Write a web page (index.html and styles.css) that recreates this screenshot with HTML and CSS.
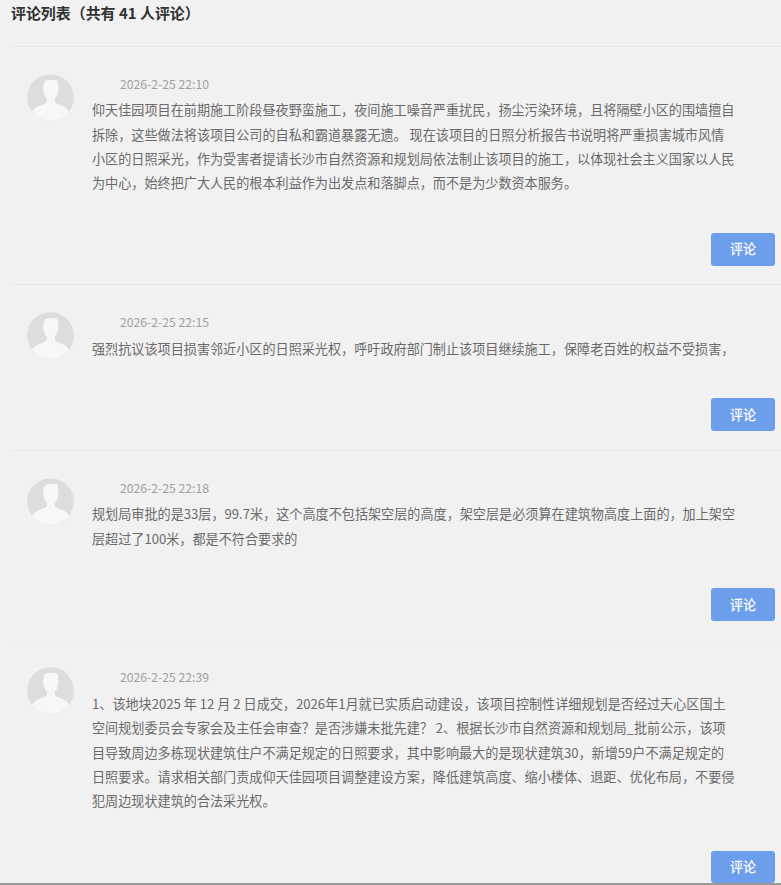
FILE: index.html
```html
<!DOCTYPE html>
<html lang="zh-CN">
<head>
  <meta charset="UTF-8" />
  <meta name="viewport" content="width=device-width, initial-scale=1.0" />
  <title>评论列表</title>
  <link rel="stylesheet" href="styles.css">
</head>
<body>
  <!-- Shared avatar -->
  <svg class="defs" width="0" height="0">
    <symbol id="avatar" viewBox="0 0 47 47">
      <clipPath id="round"><circle cx="23.5" cy="23.5" r="23.3" /></clipPath>
      <circle cx="23.5" cy="23.5" r="23.3" fill="#dddddd" />
      <path clip-path="url(#round)" fill="#f7f7f7" d="M18.500 7Q20 5.500 23 6H30Q31.700 9 31.500 15Q31 21.500 27.800 25V27.500Q29 30 34 31.500Q40 33 42 38V47H5V38Q7.500 33 13.500 31.500Q18.700 30 20 27.500V25Q16.500 21.500 16.200 15Q16 9.500 18.500 7Z" />
    </symbol>
  </svg>

  <div class="comments">
    <h1>评论列表（共有 41 人评论）</h1>

    <div class="comment">
      <svg class="avatar"><use href="#avatar" /></svg>
      <div class="content">
        <div class="date">2026-2-25 22:10</div>
        <p>仰天佳园项目在前期施工阶段昼夜野蛮施工，夜间施工噪音严重扰民，扬尘污染环境，且将隔壁小区的围墙擅自<br>拆除，这些做法将该项目公司的自私和霸道暴露无遗。 现在该项目的日照分析报告书说明将严重损害城市风情<br>小区的日照采光，作为受害者提请长沙市自然资源和规划局依法制止该项目的施工，以体现社会主义国家以人民<br>为中心，始终把广大人民的根本利益作为出发点和落脚点，而不是为少数资本服务。</p>
        <button>评论</button>
      </div>
    </div>

    <div class="comment">
      <svg class="avatar"><use href="#avatar" /></svg>
      <div class="content">
        <div class="date">2026-2-25 22:15</div>
        <p>强烈抗议该项目损害邻近小区的日照采光权，呼吁政府部门制止该项目继续施工，保障老百姓的权益不受损害，</p>
        <button>评论</button>
      </div>
    </div>

    <div class="comment">
      <svg class="avatar"><use href="#avatar" /></svg>
      <div class="content">
        <div class="date">2026-2-25 22:18</div>
        <p>规划局审批的是33层，99.7米，这个高度不包括架空层的高度，架空层是必须算在建筑物高度上面的，加上架空<br>层超过了100米，都是不符合要求的</p>
        <button>评论</button>
      </div>
    </div>

    <div class="comment faint">
      <svg class="avatar"><use href="#avatar" /></svg>
      <div class="content">
        <div class="date">2026-2-25 22:39</div>
        <p>1、该地块2025 年 12 月 2 日成交，2026年1月就已实质启动建设，该项目控制性详细规划是否经过天心区国土<br>空间规划委员会专家会及主任会审查？是否涉嫌未批先建？ 2、根据长沙市自然资源和规划局_批前公示，该项<br>目导致周边多栋现状建筑住户不满足规定的日照要求，其中影响最大的是现状建筑30，新增59户不满足规定的<br>日照要求。请求相关部门责成仰天佳园项目调整建设方案，降低建筑高度、缩小楼体、退距、优化布局，不要侵<br>犯周边现状建筑的合法采光权。</p>
        <button>评论</button>
      </div>
    </div>
  </div>
  <div class="bottom"></div>
</body>
</html>
```

FILE: styles.css
```css
* {
  box-sizing: border-box;
}
body {
  margin: 0;
  height: 885px;
  overflow: hidden;
  display: flex;
  flex-direction: column;
  background: #f1f1f1;
  color: #6a6a6a;
  font-family: "Noto Sans CJK SC", sans-serif;
}
.defs {
  display: block;
  flex: none;
}
.comments {
  height: 883px;
  flex: none;
  overflow: hidden;
  padding-left: 11px;
}
h1 {
  margin: 0;
  height: 46px;
  font-size: 14.95px;
  line-height: 25px;
  font-weight: 700;
  color: #333;
}

/* Comment rows */
.comment {
  display: flex;
  border-top: 1px solid #e6e6e6;
  padding: 26.8px 6px 18.8px 15.5px;
}
.comment.faint {
  border-top-color: #efefef;
}
.avatar {
  width: 47px;
  height: 47px;
  flex: none;
  margin-right: 18.5px;
}
.content {
  flex: 1;
  display: flex;
  flex-direction: column;
}
.date {
  padding-left: 28px;
  height: 24.7px;
  line-height: 21.4px;
  font-size: 12.2px;
  color: #a0a0a0;
}
.content p {
  margin: 0 0 37.3px;
  font-size: 13.12px;
  line-height: 24.3px;
  white-space: nowrap;
}
.content button {
  align-self: flex-end;
  width: 64px;
  height: 32.6px;
  padding: 0 0 1px;
  border: none;
  border-radius: 3px;
  background: #6d9eeb;
  color: #fff;
  font-family: inherit;
  font-size: 13.1px;
  font-weight: 500;
  cursor: pointer;
}
.bottom {
  height: 2px;
  flex: none;
  background: #999;
}
```
